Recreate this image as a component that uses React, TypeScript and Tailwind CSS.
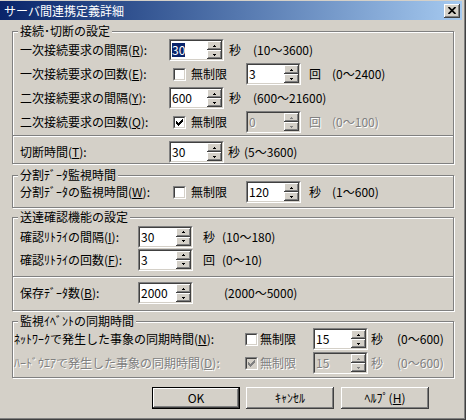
import type { ReactNode } from "react";

const sunkenOuter = "border border-t-[#808080] border-l-[#808080] border-r-white border-b-white";
const sunkenInner = "border border-t-[#404040] border-l-[#404040] border-r-[#d4d0c8] border-b-[#d4d0c8]";
const raised = "shadow-[inset_-1px_-1px_#404040,inset_1px_1px_#fff,inset_-2px_-2px_#808080,inset_2px_2px_#d4d0c8]";
const dis = "text-[#808080] [text-shadow:1px_1px_0_#fff]";

function Arrow({ up, disabled }: { up?: boolean; disabled?: boolean }) {
    const c = disabled ? "#808080" : "#000";
    return (
        <svg width="3" height="2" viewBox="0 0 3 2" shapeRendering="crispEdges">
            {up ? (
                <>
                    <rect x="1" y="0" width="1" height="1" fill={c} />
                    <rect x="0" y="1" width="3" height="1" fill={c} />
                </>
            ) : (
                <>
                    <rect x="0" y="0" width="3" height="1" fill={c} />
                    <rect x="1" y="1" width="1" height="1" fill={c} />
                </>
            )}
        </svg>
    );
}

function SpinBox({ value, disabled, selected }: { value: string; disabled?: boolean; selected?: boolean }) {
    return (
        <div className={`h-[22px] w-[55px] shrink-0 ${sunkenOuter}`}>
            <div className={`flex h-full ${sunkenInner} ${disabled ? "bg-[#d4d0c8]" : "bg-white"}`}>
                <div className="flex flex-1 items-center pl-px">
                    {selected ? (
                        <span className="bg-[#0a246a] text-white">{value}</span>
                    ) : (
                        <span className={disabled ? dis : ""}>{value}</span>
                    )}
                </div>
                <div className="flex w-[15px] flex-col">
                    <div className={`flex flex-1 items-center justify-center bg-[#d4d0c8] ${raised}`}>
                        <Arrow up disabled={disabled} />
                    </div>
                    <div className={`flex flex-1 items-center justify-center bg-[#d4d0c8] ${raised}`}>
                        <Arrow disabled={disabled} />
                    </div>
                </div>
            </div>
        </div>
    );
}

function Check({ checked, disabled }: { checked?: boolean; disabled?: boolean }) {
    const c = disabled ? "#808080" : "#000";
    // classic 7x7 check mark, row by row
    const px: [number, number, number][] = [
        [6, 0, 1], [5, 1, 2], [0, 2, 1], [4, 2, 3], [0, 3, 2], [3, 3, 3], [0, 4, 5], [1, 5, 3], [2, 6, 1],
    ];
    return (
        <div className={`h-[13px] w-[13px] shrink-0 ${sunkenOuter}`}>
            <div className={`flex h-full w-full items-center justify-center ${sunkenInner} ${disabled ? "bg-[#d4d0c8]" : "bg-white"}`}>
                {checked && (
                    <svg width="7" height="7" viewBox="0 0 7 7" shapeRendering="crispEdges">
                        {px.map(([x, y, w]) => (
                            <rect key={`${x}-${y}`} x={x} y={y} width={w} height="1" fill={c} />
                        ))}
                    </svg>
                )}
            </div>
        </div>
    );
}

function Group({ title, className, children }: { title: string; className?: string; children: ReactNode }) {
    return (
        <div className={`relative ml-[12px] w-[442px] border border-[#808080] shadow-[1px_1px_0_#fff,inset_1px_1px_0_#fff] ${className ?? ""}`}>
            <span className="absolute left-[5px] top-[-8px] whitespace-nowrap bg-[#d4d0c8] px-[2px] leading-[14px]">{title}</span>
            {children}
        </div>
    );
}

function Sep() {
    return <div className="h-[2px] border-t border-b border-t-[#808080] border-b-white" />;
}

function Btn({ children, def }: { children: ReactNode; def?: boolean }) {
    return (
        <div className={`h-[22px] w-[88px] ${def ? "border border-black" : ""}`}>
            <div className={`flex h-full w-full items-center justify-center ${raised}`}>{children}</div>
        </div>
    );
}

export default function App() {
    return (
        <div className="h-[420px] w-[466px] border-r border-b border-[#404040] bg-[#d4d0c8] font-['Noto_Sans_CJK_JP',sans-serif] text-[12px] leading-[14px] text-black">
            <div className="h-full border-r border-b border-[#808080] pr-[2px] pb-[2px]">
                <div className="flex h-full flex-col pt-px">
                    {/* title bar */}
                    <div className="flex h-[19px] shrink-0 items-center justify-between bg-linear-to-r from-[#0a246a] to-[#a6caf0] pl-[4px] pr-[2px]">
                        <span className="text-white">サーバ間連携定義詳細</span>
                        <div className={`flex h-[14px] w-[16px] items-center justify-center bg-[#d4d0c8] ${raised}`}>
                            <svg width="8" height="7" viewBox="0 0 8 7">
                                <path d="M0.5 0 L7.5 7 M7.5 0 L0.5 7" stroke="#000" strokeWidth="1.7" />
                            </svg>
                        </div>
                    </div>

                    {/* 接続・切断の設定 */}
                    <Group title="接続･切断の設定" className="mt-[11px]">
                        <div className="pl-[7px] pt-[6px]">
                            <div className="flex h-[24px] items-center whitespace-nowrap">
                                <div className="w-[149px]">一次接続要求の間隔(<u>R</u>):</div>
                                <SpinBox value="30" selected />
                                <span className="ml-[5px] w-[24px]">秒</span>
                                <span>(10～3600)</span>
                            </div>
                            <div className="flex h-[24px] items-center whitespace-nowrap">
                                <div className="w-[149px]">一次接続要求の回数(<u>E</u>):</div>
                                <div className="flex w-[77px] items-center pl-[4px]">
                                    <Check />
                                    <span className="ml-[5px]">無制限</span>
                                </div>
                                <SpinBox value="3" />
                                <span className="ml-[8px] w-[23px]">回</span>
                                <span>(0～2400)</span>
                            </div>
                            <div className="flex h-[24px] items-center whitespace-nowrap">
                                <div className="w-[149px]">二次接続要求の間隔(<u>Y</u>):</div>
                                <SpinBox value="600" />
                                <span className="ml-[5px] w-[24px]">秒</span>
                                <span>(600～21600)</span>
                            </div>
                            <div className="flex h-[24px] items-center whitespace-nowrap">
                                <div className="w-[149px]">二次接続要求の回数(<u>Q</u>):</div>
                                <div className="flex w-[77px] items-center pl-[4px]">
                                    <Check checked />
                                    <span className="ml-[5px]">無制限</span>
                                </div>
                                <SpinBox value="0" disabled />
                                <span className={`ml-[8px] w-[23px] ${dis}`}>回</span>
                                <span className={dis}>(0～100)</span>
                            </div>
                        </div>
                        <div className="mt-px">
                            <Sep />
                        </div>
                        <div className="pl-[7px] pt-[4px]">
                            <div className="flex h-[22px] items-center whitespace-nowrap">
                                <div className="w-[149px]">切断時間(<u>T</u>):</div>
                                <SpinBox value="30" />
                                <span className="ml-[4px] w-[16px]">秒</span>
                                <span>(5～3600)</span>
                            </div>
                        </div>
                    </Group>

                    {/* 分割データ監視時間 */}
                    <Group title="分割ﾃﾞｰﾀ監視時間" className="mt-[11px]">
                        <div className="pl-[7px] pt-[5px] pb-[4px]">
                            <div className="flex h-[22px] items-center whitespace-nowrap">
                                <div className="w-[149px]">分割ﾃﾞｰﾀの監視時間(<u>W</u>):</div>
                                <div className="flex w-[77px] items-center pl-[4px]">
                                    <Check />
                                    <span className="ml-[5px]">無制限</span>
                                </div>
                                <SpinBox value="120" />
                                <span className="ml-[8px] w-[23px]">秒</span>
                                <span>(1～600)</span>
                            </div>
                        </div>
                    </Group>

                    {/* 送達確認機能の設定 */}
                    <Group title="送達確認機能の設定" className="mt-[9px]">
                        <div className="pl-[7px] pt-[7px]">
                            <div className="flex h-[23px] items-center whitespace-nowrap">
                                <div className="w-[118px]">確認ﾘﾄﾗｲの間隔(<u>I</u>):</div>
                                <SpinBox value="30" />
                                <span className="ml-[10px] w-[19px]">秒</span>
                                <span>(10～180)</span>
                            </div>
                            <div className="flex h-[23px] items-center whitespace-nowrap">
                                <div className="w-[118px]">確認ﾘﾄﾗｲの回数(<u>F</u>):</div>
                                <SpinBox value="3" />
                                <span className="ml-[10px] w-[19px]">回</span>
                                <span>(0～10)</span>
                            </div>
                        </div>
                        <div className="mt-[5px]">
                            <Sep />
                        </div>
                        <div className="pl-[7px] pt-[4px] pb-[6px]">
                            <div className="flex h-[22px] items-center whitespace-nowrap">
                                <div className="w-[118px]">保存ﾃﾞｰﾀ数(<u>B</u>):</div>
                                <SpinBox value="2000" />
                                <span className="ml-[31px]">(2000～5000)</span>
                            </div>
                        </div>
                    </Group>

                    {/* 監視イベントの同期時間 */}
                    <Group title="監視ｲﾍﾞﾝﾄの同期時間" className="mt-[10px]">
                        <div className="pl-px pt-[5px] pb-[2px]">
                            <div className="flex h-[24px] items-center whitespace-nowrap">
                                <div className="w-[231px]">ﾈｯﾄﾜｰｸで発生した事象の同期時間(<u>N</u>):</div>
                                <div className="flex w-[68px] items-center">
                                    <Check />
                                    <span className="ml-[2px]">無制限</span>
                                </div>
                                <SpinBox value="15" />
                                <span className="ml-[3px] w-[26px]">秒</span>
                                <span>(0～600)</span>
                            </div>
                            <div className="flex h-[24px] items-center whitespace-nowrap">
                                <div className={`w-[231px] ${dis}`}>ﾊｰﾄﾞｳｴｱで発生した事象の同期時間(<u>D</u>):</div>
                                <div className="flex w-[68px] items-center">
                                    <Check checked disabled />
                                    <span className={`ml-[2px] ${dis}`}>無制限</span>
                                </div>
                                <SpinBox value="15" disabled />
                                <span className={`ml-[3px] w-[26px] ${dis}`}>秒</span>
                                <span className={dis}>(0～600)</span>
                            </div>
                        </div>
                    </Group>

                    {/* buttons */}
                    <div className="mt-[9px] flex gap-[6px] pl-[152px]">
                        <Btn def>OK</Btn>
                        <Btn>ｷｬﾝｾﾙ</Btn>
                        <div className="ml-px">
                            <Btn>
                                <span>ﾍﾙﾌﾟ(<u>H</u>)</span>
                            </Btn>
                        </div>
                    </div>
                </div>
            </div>
        </div>
    );
}
